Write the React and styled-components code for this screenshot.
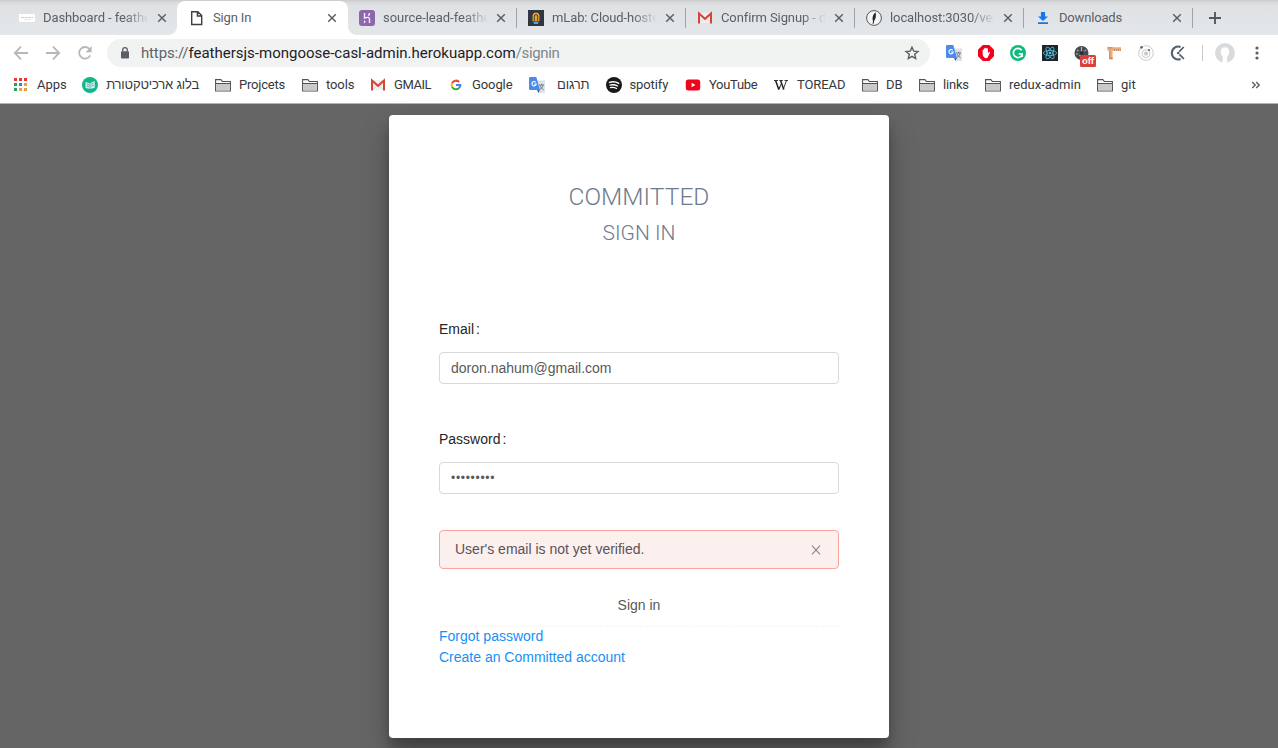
import React from "react";
import styled, { createGlobalStyle, css } from "styled-components";

const Global = createGlobalStyle`
  * { box-sizing: border-box; }
  html, body { margin: 0; padding: 0; }
  body { background: #656565; overflow: hidden; }
  svg { display: block; flex: none; }
`;

const ui = css`font-family: Roboto, "Liberation Sans", sans-serif;`;

const Window = styled.div`
  width: 1278px;
  height: 748px;
  display: flex;
  flex-direction: column;
  overflow: hidden;
`;

/* ---------- tab strip ---------- */
const TabStrip = styled.div`
  height: 35px;
  display: flex;
  background: linear-gradient(#c9c9cb 0, #d8d9db 2px, #dfe2e5 6px, #e4e7ea 35px);
  ${ui}
`;
const Tab = styled.div`
  position: relative;
  height: 35px;
  width: ${(p) => p.$w}px;
  padding: 0 10px 0 ${(p) => p.$pad}px;
  display: flex;
  align-items: center;
  gap: 8px;
  color: #5c6065;
`;
const FirstTab = styled(Tab)`padding-right: 9px;`;
const ActiveTab = styled(Tab)`
  margin-top: 1px;
  height: 34px;
  padding-bottom: 1px;
  background: #fff;
  border-radius: 8px 8px 0 0;
  &::before, &::after {
    content: "";
    position: absolute;
    bottom: 0;
    width: 8px;
    height: 8px;
  }
  &::before { left: -8px; background: radial-gradient(circle at 0 0, transparent 7.5px, #fff 8px); }
  &::after { right: -8px; background: radial-gradient(circle at 100% 0, transparent 7.5px, #fff 8px); }
`;
const TabTitle = styled.div`
  flex: 1;
  min-width: 0;
  white-space: nowrap;
  font-size: 13px;
  line-height: 18px;
  letter-spacing: ${(p) => p.$ls || 0}px;
  ${(p) => p.$fade && css`mask-image: linear-gradient(90deg, #000 78%, transparent 101%);`}
`;
const TabDivider = styled.div`
  width: 1px;
  height: 20px;
  margin-top: 8px;
  margin-left: -1px;
  background: #a0a3a7;
`;
const NewTab = styled.div`
  display: flex;
  align-items: center;
  padding-left: 14px;
`;

/* ---------- address row ---------- */
const Toolbar = styled.div`
  height: 35px;
  display: flex;
  align-items: center;
  padding: 1px 0 0 13px;
  background: #fff;
  ${ui}
`;
const NavIcons = styled.div`
  display: flex;
  gap: 16px;
  width: 94px;
`;
const Omnibox = styled.div`
  width: 823px;
  height: 28px;
  border-radius: 14px;
  background: #f1f3f3;
  display: flex;
  align-items: center;
  padding: 0 10px 0 13px;
`;
const Url = styled.div`
  flex: 1;
  margin-left: 11px;
  font-size: 15px;
  line-height: 20px;
  color: #1f2124;
  white-space: nowrap;
`;
const Scheme = styled.span`color: #5f6368; letter-spacing: -0.15px;`;
const Path = styled.span`color: #80868b; letter-spacing: -0.35px;`;
const Extensions = styled.div`
  display: flex;
  gap: 16px;
  margin-left: 16px;
`;
const Extension = styled.div`
  position: relative;
  width: 16px;
  height: 16px;
`;
const OffBadge = styled.span`
  position: absolute;
  left: 6px;
  top: 10px;
  width: 16px;
  height: 12px;
  border-radius: 1.5px;
  background: #da3f3b;
  color: #fff;
  font: 700 9.5px/12px "Liberation Sans", sans-serif;
  letter-spacing: -0.1px;
  text-align: center;
`;
const BarDivider = styled.div`
  width: 1px;
  height: 16px;
  margin: 0 12px 0 16px;
  background: #c6c8ca;
`;
const Menu = styled.div`margin-left: 20px;`;

/* ---------- bookmarks ---------- */
const Bookmarks = styled.div`
  height: 34px;
  padding: 0 17px 4px 13px;
  display: flex;
  align-items: center;
  gap: 16px;
  background: #fff;
  border-bottom: 1px solid #b4b4b4;
  ${ui}
`;
const Bookmark = styled.div`
  display: flex;
  align-items: center;
  gap: 8px;
`;
const BookmarkLabel = styled.span`
  width: ${(p) => p.$w}px;
  font-size: 13px;
  line-height: 18px;
  letter-spacing: ${(p) => p.$ls || 0}px;
  white-space: nowrap;
  color: #35383c;
  text-align: ${(p) => (p.dir === "rtl" ? "right" : "left")};
  direction: ltr;
  ${(p) => p.dir === "rtl" && css`font-family: "Liberation Sans", sans-serif;`}
`;
const More = styled.div`margin-left: auto;`;

/* ---------- page ---------- */
const Page = styled.main`
  flex: 1;
  display: flex;
  justify-content: center;
  align-items: flex-start;
  padding-top: 11px;
  background: #656565;
  font-family: "Liberation Sans", Arial, sans-serif;
  font-size: 14px;
  line-height: 21px;
`;
const Card = styled.section`
  width: 500px;
  height: 623px;
  padding: 64px 50px 0;
  border-radius: 4px;
  background: #fff;
  box-shadow: 0 14px 28px rgba(0, 0, 0, 0.26), 0 10px 10px rgba(0, 0, 0, 0.18);
`;
const Heading = styled.h1`
  margin: 0;
  text-align: center;
  font-family: Roboto, "Liberation Sans", sans-serif;
  font-weight: 300;
  font-size: ${(p) => p.$size}px;
  line-height: 36px;
  letter-spacing: ${(p) => p.$ls}px;
  color: #6f7b8f;
`;
const Field = styled.div`
  padding-top: ${(p) => p.$top}px;
`;
const Label = styled.label`
  display: block;
  height: 33px;
  color: #262626;
`;
const Colon = styled.span`margin-left: 2px;`;
const Input = styled.div`
  height: 32px;
  border: 1px solid #d9d9d9;
  border-radius: 4px;
  padding: 0 11px;
  line-height: 31px;
  color: #595959;
`;
const PasswordInput = styled(Input)`
  font-size: 12px;
  line-height: 31px;
  letter-spacing: 0.7px;
`;
const Alert = styled.div`
  margin-top: 36px;
  height: 39px;
  border: 1px solid #ffa39e;
  border-radius: 4px;
  background: #fcf0ef;
  display: flex;
  align-items: center;
  justify-content: space-between;
  padding: 0 17px 1px 15px;
  color: #595355;
`;
const Dismiss = styled.span`padding-top: 2px;`;
const SignIn = styled.button`
  display: block;
  width: 100%;
  height: 32px;
  margin: 21px 0 4px;
  padding: 0 0 2px;
  border: 0;
  background: none;
  font: inherit;
  line-height: 30px;
  color: #595959;
  text-align: center;
`;
const Links = styled.nav`
  border-top: 1px dashed #f5f5f5;
  display: flex;
  flex-direction: column;
`;
const Link = styled.a`
  color: #1890f5;
  &:first-child { margin-top: -1px; }
`;

/* ---------- icons ---------- */
const S = ({ w = 16, h = 16, vb, children, ...r }) => (
  <svg width={w} height={h} viewBox={vb || `0 0 ${w} ${h}`} fill="none" {...r}>{children}</svg>
);
const Close = () => <S w={12} h={12} stroke="#5c6065" strokeWidth="1.5"><path d="M2.2 2.2l7.6 7.6M9.8 2.2L2.2 9.8" /></S>;
const PlaceholderIcon = () => (
  <S><path fill="#fff" d="M0 4h16v8H0z" /><path stroke="#cfcfd1" d="M2 7.5h12" strokeDasharray="3 .6" /><path stroke="#e6e6e6" d="M5 9.5h7" /></S>
);
const FileIcon = () => <S><path stroke="#3c4043" strokeWidth="1.4" d="M2.7 1.7h6.1l3.9 3.9v8.9h-10zM8.4 1.7v4.3h4.3" /></S>;
const HerokuIcon = () => (
  <S><rect width="16" height="16" rx="3" fill="#8b68ad" /><path stroke="#f4ecf8" strokeWidth="1.4" d="M5.5 3v5.2C8 7 10.5 7 10.5 9v4M10.5 3c0 1-.5 2-1.2 2.8" /><path fill="#f4ecf8" d="M4.9 10.3l2 1.5-2 1.6z" /></S>
);
const MlabIcon = () => (
  <S><rect width="16" height="16" fill="#2f3640" /><path fill="#eca42b" d="M4.5 11V6a3.5 3.5 0 0 1 7 0v5z" /><path stroke="#2f3640" strokeWidth=".9" d="M6.3 11V6.3a1.7 1.7 0 0 1 3.4 0V11" /><path fill="#48a7df" d="M5 11.5h6L9.8 14H6.2z" /></S>
);
const GmailIcon = () => (
  <S><path fill="#f1eeee" d="M2 3h12v10H2z" /><path stroke="#ddd" d="M3 12l5-4 5 4" /><path stroke="#d9443a" strokeWidth="2" d="M2 13.4V3.4l6 5.4 6-5.4v10" /></S>
);
const FeatherIcon = () => (
  <S><circle cx="8" cy="8" r="7.4" fill="#f4f5f6" stroke="#53575b" strokeWidth="1" /><path fill="#24272a" d="M7 11C5.8 7.5 7.4 4 9.5 2.3c.8 2.8.6 6-1.2 8.2L7.4 14h-.8z" /></S>
);
const DownloadIcon = () => (
  <S><path fill="#1a73e8" d="M5.9 2h4.2v4.5H13L8 11 3 6.5h2.9zM3 12.3h10v1.8H3z" /></S>
);
const TranslateIcon = () => (
  <S><path fill="#dfe2e5" d="M6 3.5h10V16H9.5z" /><path fill="#4a8ae8" d="M0 1.3Q0 0 1.3 0h6l3.7 13H1.3Q0 13 0 11.7z" /><path fill="#3568bd" d="M8 13h3l-1.6 3z" /><path stroke="#fff" strokeWidth="1.1" d="M6.8 5.2A2.2 2.2 0 1 0 7.3 7H5.2" /><path stroke="#65727e" strokeWidth=".9" d="M10 8h5M12.5 6.8V8M14 8c-.4 2.3-1.6 3.6-3.2 4.6M11 9c.8 1.7 2 2.9 3.6 3.8" /></S>
);
const AdblockIcon = () => (
  <S><path fill="#f3001c" d="M4.8 0h6.4L16 4.8v6.4L11.2 16H4.8L0 11.2V4.8z" /><path fill="#fff" d="M4.6 8.6V5q.6-.8 1.3 0V3.6q.7-.8 1.3 0v-.5q.7-.8 1.4 0v.6q.7-.7 1.3 0v4.6l1.1-1.4q1.2-.3 1 .5l-2.1 4.6Q9.6 13.2 8 13.2q-3.2-.3-3.4-4.6z" /></S>
);
const GrammarlyIcon = () => (
  <S><circle cx="8" cy="8" r="8" fill="#10ba79" /><path stroke="#fff" strokeWidth="1.7" d="M11.7 5.2A4.6 4.6 0 1 0 12.3 9.5M8.8 8.8h3.4v3.3" /></S>
);
const ReactIcon = () => (
  <S><rect width="16" height="16" fill="#202225" /><g stroke="#4fc6e6" strokeWidth=".8"><ellipse cx="8" cy="8" rx="6.6" ry="2.6" /><ellipse cx="8" cy="8" rx="6.6" ry="2.6" transform="rotate(60 8 8)" /><ellipse cx="8" cy="8" rx="6.6" ry="2.6" transform="rotate(120 8 8)" /></g><circle cx="8" cy="8" r="1.3" fill="#4fc6e6" /></S>
);
const ClockIcon = () => (
  <S><circle cx="7.5" cy="8" r="7" fill="#46494d" /><path stroke="#b9bcc0" strokeWidth="1.1" d="M7.5 2v4M3 5l1.4 1M12 5l-1.4 1M2 9h2M7.5 8l-2 3" /><circle cx="7.5" cy="8.4" r="1.6" fill="#25272a" /></S>
);
const RulerIcon = () => (
  <S><path fill="#eaae7f" d="M1.5 2.2H15v3.6H6.6v8.4H3.2V5.8H1.5z" /><path fill="#cf8558" d="M1.5 2.2h5.1v1.2H1.5zM3.2 12.6h3.4v1.6H3.2zM3.2 5.8h1v7h-1z" /><path stroke="#9b705a" strokeWidth=".8" d="M8.5 4v1.8M10.5 4.5v1.3M12.5 4v1.8M14.3 4.5v1.3" /></S>
);
const OrbitIcon = () => (
  <S><g stroke="#c8cacc"><circle cx="8" cy="8" r="7.3" /><circle cx="8" cy="8.6" r="4" /></g><circle cx="8" cy="8.6" r="2.1" fill="#c8cacc" /><circle cx="3.5" cy="2.3" r="1.4" fill="#67696b" /><circle cx="11" cy="5" r="1.1" fill="#67696b" /></S>
);
const ClockifyIcon = () => (
  <S><path stroke="#53616d" strokeWidth="2.1" d="M10.6 1.9A6.5 6.5 0 1 0 10.6 14.1" /><path stroke="#53616d" strokeWidth="1.7" d="M9.2 6.7L13.8 2M9.4 9.4l4.5 4.5" /><circle cx="8.2" cy="8" r="1.3" fill="#53616d" /></S>
);
const AvatarIcon = () => (
  <S w={20} h={20}><circle cx="10" cy="10" r="10" fill="#d9dadb" /><path fill="#fff" d="M10 4.3c2.8 0 4.4 1.8 4.2 4.5-.1 2.2-1 3.9-2.1 4.7l.2 5.9c-1.6.7-3.2.7-4.7 0l.2-5.9c-1.1-.8-2-2.5-2.1-4.7-.1-2.7 1.5-4.5 4.3-4.5z" /></S>
);
const FolderIcon = () => (
  <S><path fill="#fff" stroke="#505356" strokeWidth="1.1" d="M.6 14V2.6h5.3l1.5 1.9h8V14z" /><path fill="#c8c9ca" d="M1.2 6.8h13.6v6.6H1.2z" /><path stroke="#505356" strokeWidth="1" d="M1 6.5h14" /></S>
);
const AppsIcon = () => {
  const colors = ["#ee3434", "#ee3434", "#ee3434", "#27a05a", "#2d83ea", "#e9a23b", "#27a05a", "#e9a23b", "#e9a23b"];
  return <S>{colors.map((c, i) => <rect key={i} x={1 + (i % 3) * 5} y={1 + Math.floor(i / 3) * 5} width="3" height="3" fill={c} />)}</S>;
};
const BlogIcon = () => (
  <S><circle cx="8" cy="8" r="8" fill="#10b884" /><path fill="#d6f0f0" d="M3.5 5L8 6.2 12.7 4v6.8L8 12l-4.5-1z" /><path stroke="#3e91b3" strokeWidth=".8" d="M8 6.2V12M4.7 7l2.2.5M4.7 9l2.2.5M9.3 7l2.2-.5M9.3 9l2.2-.5" /></S>
);
const GoogleIcon = () => (
  <S strokeWidth="2.1"><path stroke="#ea4335" d="M4.1 6.1A4.3 4.3 0 0 1 11.1 5" /><path stroke="#fbbc05" d="M4.1 9.9a4.3 4.3 0 0 1 0-3.8" /><path stroke="#34a853" d="M4.1 9.9A4.3 4.3 0 0 0 10.8 11.2" /><path stroke="#4285f4" d="M8 8h4.3c0 1.4-.6 2.5-1.5 3.2" /></S>
);
const SpotifyIcon = () => (
  <S><circle cx="8" cy="8" r="8" fill="#191919" /><g stroke="#fff" strokeLinecap="round"><path strokeWidth="1.5" d="M3.5 5.4c3-.9 6.4-.7 9.2.9" /><path strokeWidth="1.3" d="M4 8.1c2.6-.7 5.2-.4 7.6.9" /><path strokeWidth="1.1" d="M4.4 10.6c2.1-.5 4.2-.2 6.2.8" /></g></S>
);
const YoutubeIcon = () => <S><rect x=".8" y="2.6" width="14.4" height="10.8" rx="2.6" fill="#f40018" /><path fill="#fff" d="M6.6 5.8v4.4L10.5 8z" /></S>;
const WikiIcon = () => (
  <S stroke="#222"><path strokeWidth=".9" d="M1 3.5h4M6.3 3.5h3.6M11.5 3.5H15M8.2 3.5h.4M7.2 9.5L5.7 12.5M13.5 3.5l-3.3 9" /><path strokeWidth="1.5" d="M2.6 3.5l3.2 9M7.6 3.5l3.2 9" /><path strokeWidth=".9" d="M5.6 12.5L8.6 6" /></S>
);
const BackIcon = () => <S stroke="#b5b8bb" strokeWidth="1.8"><path d="M15 8H2M8 1.6L1.8 8 8 14.4" /></S>;
const ForwardIcon = () => <S stroke="#b5b8bb" strokeWidth="1.8"><path d="M1 8h13M8 1.6L14.2 8 8 14.4" /></S>;
const ReloadIcon = () => <S><path stroke="#b5b8bb" strokeWidth="1.8" d="M13.2 10.3A5.8 5.8 0 1 1 12.6 4.3" /><path fill="#b5b8bb" d="M14.7 1v6.3H8.5z" /></S>;
const LockIcon = () => <S w={10} h={14}><rect x="1" y="5.2" width="8" height="7.4" rx=".8" fill="#5b5f64" /><path stroke="#5b5f64" strokeWidth="1.3" d="M2.7 5.5V4a2.3 2.3 0 0 1 4.6 0v1.5" /></S>;
const StarIcon = () => <S><path stroke="#5b5f64" strokeWidth="1.4" d="M8 2.2l1.7 3.9 4.3.4-3.3 2.8 1 4.2L8 11.3l-3.7 2.2 1-4.2L2 6.5l4.3-.4z" /></S>;
const DotsIcon = () => <S w={4} h={16}><g fill="#5b5f64"><circle cx="2" cy="3" r="1.6" /><circle cx="2" cy="8" r="1.6" /><circle cx="2" cy="13" r="1.6" /></g></S>;
const PlusIcon = () => <S stroke="#54585d" strokeWidth="1.9"><path d="M8 2v12M2 8h12" /></S>;
const ChevronsIcon = () => <S w={10} h={8} stroke="#5b5f64" strokeWidth="1.4"><path d="M1.2 1L4.2 4 1.2 7M5.2 1L8.2 4 5.2 7" /></S>;
const AlertClose = () => <S w={10} h={10} stroke="#8f8486" strokeWidth="1.1"><path d="M1 .6l8 8.8M9 .6L1 9.4" /></S>;

const TABS = [
  { title: "source-lead-feathe", icon: <HerokuIcon />, ls: -0.02 },
  { title: "mLab: Cloud-hoste", icon: <MlabIcon />, ls: -0.1 },
  { title: "Confirm Signup - d", icon: <GmailIcon />, ls: -0.1 },
  { title: "localhost:3030/ver", icon: <FeatherIcon />, ls: -0.1 },
  { title: "Downloads", icon: <DownloadIcon />, ls: -0.18, full: true },
];

const BOOKMARKS = [
  ["Apps", <AppsIcon />, 29],
  ["בלוג ארכיטקטורת", <BlogIcon />, 93, -0.17, true],
  ["Projcets", <FolderIcon />, 47, -0.2],
  ["tools", <FolderIcon />, 28, -0.1],
  ["GMAIL", <GmailIcon />, 38, -0.45],
  ["Google", <GoogleIcon />, 41, -0.1],
  ["תרגום", <TranslateIcon />, 36.5, -0.1, true],
  ["spotify", <SpotifyIcon />, 39.5, -0.1],
  ["YouTube", <YoutubeIcon />, 48, -0.3],
  ["TOREAD", <WikiIcon />, 49, -0.1],
  ["DB", <FolderIcon />, 17],
  ["links", <FolderIcon />, 26, -0.2],
  ["redux-admin", <FolderIcon />, 72],
  ["git", <FolderIcon />, 16],
];

const EXTENSIONS = [TranslateIcon, AdblockIcon, GrammarlyIcon, ReactIcon, ClockIcon, RulerIcon, OrbitIcon, ClockifyIcon];

export default function App() {
  return (
    <Window>
      <Global />
      <TabStrip>
        <FirstTab $w={177} $pad={19}>
          <PlaceholderIcon /><TabTitle $fade $ls={-0.1}>Dashboard - feathe</TabTitle><Close />
        </FirstTab>
        <ActiveTab $w={171} $pad={12}>
          <FileIcon /><TabTitle $ls={-0.15}>Sign In</TabTitle><Close />
        </ActiveTab>
        {TABS.map((t) => (
          <React.Fragment key={t.title}>
            <Tab $w={169} $pad={11}>
              {t.icon}<TabTitle $fade={!t.full} $ls={t.ls}>{t.title}</TabTitle><Close />
            </Tab>
            <TabDivider />
          </React.Fragment>
        ))}
        <NewTab><PlusIcon /></NewTab>
      </TabStrip>

      <Toolbar>
        <NavIcons><BackIcon /><ForwardIcon /><ReloadIcon /></NavIcons>
        <Omnibox>
          <LockIcon />
          <Url><Scheme>https://</Scheme>feathersjs-mongoose-casl-admin.herokuapp.com<Path>/signin</Path></Url>
          <StarIcon />
        </Omnibox>
        <Extensions>
          {EXTENSIONS.map((Icon, i) => (
            <Extension key={i}><Icon />{Icon === ClockIcon && <OffBadge>off</OffBadge>}</Extension>
          ))}
        </Extensions>
        <BarDivider />
        <AvatarIcon />
        <Menu><DotsIcon /></Menu>
      </Toolbar>

      <Bookmarks>
        {BOOKMARKS.map(([name, icon, w, ls, rtl]) => (
          <Bookmark key={name}>{icon}<BookmarkLabel $w={w} $ls={ls} dir={rtl ? "rtl" : "ltr"}>{name}</BookmarkLabel></Bookmark>
        ))}
        <More><ChevronsIcon /></More>
      </Bookmarks>

      <Page>
        <Card>
          <Heading $size={24.5} $ls={0.05}>COMMITTED</Heading>
          <Heading as="h2" $size={21} $ls={0}>SIGN IN</Heading>
          <Field $top={68}>
            <Label>Email<Colon>:</Colon></Label>
            <Input>doron.nahum@gmail.com</Input>
          </Field>
          <Field $top={45}>
            <Label>Password<Colon>:</Colon></Label>
            <PasswordInput>•••••••••</PasswordInput>
          </Field>
          <Alert>User's email is not yet verified.<Dismiss><AlertClose /></Dismiss></Alert>
          <SignIn>Sign in</SignIn>
          <Links>
            <Link>Forgot password</Link>
            <Link>Create an Committed account</Link>
          </Links>
        </Card>
      </Page>
    </Window>
  );
}
